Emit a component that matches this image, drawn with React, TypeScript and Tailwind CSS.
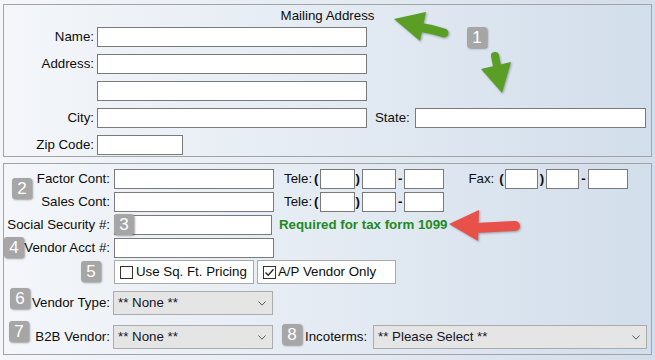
import React from "react";

const Field = ({ className = "" }: { className?: string }) => (
  <div className={`h-[20px] shrink-0 border border-[#7a7a7a] bg-white ${className}`} />
);

const Chevron = () => (
  <svg width="8" height="5" viewBox="0 0 8 5" className="shrink-0">
    <path d="M0.5 0.5 L4 4.2 L7.5 0.5" stroke="#5a5a5a" strokeWidth="1" fill="none" />
  </svg>
);

const Dropdown = ({ value, className = "" }: { value: string; className?: string }) => (
  <div
    className={`h-[24px] shrink-0 flex items-center justify-between border border-[#ababab] bg-[#e5e5e5] pl-[4px] pr-[6px] text-[#141428] ${className}`}
  >
    <span>{value}</span>
    <Chevron />
  </div>
);

const Check = ({ checked }: { checked?: boolean }) => (
  <div className="w-[13px] h-[13px] shrink-0 border border-[#333] bg-white flex items-center justify-center">
    {checked && (
      <svg width="11" height="11" viewBox="0 0 11 11">
        <path d="M1.5 5.5 L4.2 8.3 L9.5 2.2" stroke="#222" strokeWidth="1.3" fill="none" />
      </svg>
    )}
  </div>
);

const Badge = ({ n, className }: { n: string; className: string }) => (
  <div
    className={`absolute w-[20px] h-[21px] rounded-[3px] bg-[#a6a6a6] text-white text-[17px] font-light flex items-center justify-center shadow-[1px_1px_2px_rgba(0,0,0,0.35)] ${className}`}
  >
    {n}
  </div>
);

const Paren = ({ c }: { c: string }) => <span className="font-bold">{c}</span>;

const Phone = () => (
  <>
    <Paren c="(" />
    <Field className="ml-[1px] w-[35px]" />
    <span className="ml-[1px]"><Paren c=")" /></span>
    <Field className="ml-[2px] w-[34px]" />
    <span className="ml-[2px]"><Paren c="-" /></span>
    <Field className="ml-[2px] w-[40px]" />
  </>
);

export default function App() {
  return (
    <div className="relative w-[655px] h-[360px] overflow-hidden pt-[4px] bg-gradient-to-r from-[#f4f6fa] via-[#e4ebf3] to-[#d2deeb] text-[13.3px] leading-none text-[#0d0d0d] font-['Liberation_Sans',Arial,sans-serif]">
      {/* Mailing address */}
      <div className="ml-[3px] w-[649px] border border-[#a3a3a3] pb-[1px]">
        <div className="h-[22px] flex items-center justify-center">Mailing Address</div>
        <div className="flex flex-col gap-[7px]">
          <div className="flex items-center">
            <span className="w-[90px] text-right">Name:</span>
            <Field className="ml-[3px] w-[270px]" />
          </div>
          <div className="flex items-center">
            <span className="w-[90px] text-right">Address:</span>
            <Field className="ml-[3px] w-[270px]" />
          </div>
          <div className="flex items-center">
            <span className="w-[90px]" />
            <Field className="ml-[3px] w-[270px]" />
          </div>
          <div className="flex items-center">
            <span className="w-[90px] text-right">City:</span>
            <Field className="ml-[3px] w-[270px]" />
            <span className="ml-[8px]">State:</span>
            <Field className="ml-[5px] w-[231px]" />
          </div>
          <div className="flex items-center">
            <span className="w-[90px] text-right">Zip Code:</span>
            <Field className="ml-[3px] w-[86px]" />
          </div>
        </div>
      </div>

      {/* Vendor details */}
      <div className="ml-[3px] mt-[6px] w-[649px] border border-[#a3a3a3] pt-[5px] pb-[5px]">
        <div className="flex items-center">
          <span className="w-[106px] text-right">Factor Cont:</span>
          <Field className="ml-[4px] w-[160px]" />
          <span className="ml-[10px] mr-[2px]">Tele:</span>
          <Phone />
          <span className="ml-[24px] mr-[5px]">Fax:</span>
          <Paren c="(" />
          <Field className="ml-[1px] w-[33px]" />
          <span className="ml-[2px]"><Paren c=")" /></span>
          <Field className="ml-[2px] w-[33px]" />
          <span className="ml-[2px]"><Paren c="-" /></span>
          <Field className="ml-[2px] w-[40px]" />
        </div>
        <div className="mt-[3px] flex items-center">
          <span className="w-[106px] text-right">Sales Cont:</span>
          <Field className="ml-[4px] w-[160px]" />
          <span className="ml-[10px] mr-[2px]">Tele:</span>
          <Phone />
        </div>
        <div className="mt-[3px] flex items-center">
          <span className="w-[106px] text-right">Social Security #:</span>
          <Field className="ml-[4px] w-[158px]" />
          <span className="ml-[7px] font-bold text-[#1f8a1f]">Required for tax form 1099</span>
        </div>
        <div className="mt-[3px] flex items-center">
          <span className="w-[106px] text-right">Vendor Acct #:</span>
          <Field className="ml-[4px] w-[160px]" />
        </div>
        <div className="mt-[2px] flex items-center">
          <span className="w-[106px]" />
          <div className="ml-[4px] w-[140px] h-[24px] flex items-center gap-[3px] border border-[#a9a9a9] bg-white pl-[5px]">
            <Check />
            <span>Use Sq. Ft. Pricing</span>
          </div>
          <div className="ml-[3px] w-[139px] h-[24px] flex items-center gap-[2px] border border-[#a9a9a9] bg-white pl-[5px]">
            <Check checked />
            <span>A/P Vendor Only</span>
          </div>
        </div>
        <div className="mt-[7px] flex items-center">
          <span className="w-[106px] text-right">Vendor Type:</span>
          <Dropdown value="** None **" className="ml-[3px] w-[160px]" />
        </div>
        <div className="mt-[10px] flex items-center">
          <span className="w-[106px] text-right">B2B Vendor:</span>
          <Dropdown value="** None **" className="ml-[3px] w-[160px]" />
          <span className="ml-[32px]">Incoterms:</span>
          <Dropdown value="** Please Select **" className="ml-[6px] w-[274px]" />
        </div>
      </div>

      {/* Annotations */}
      <svg
        className="absolute left-0 top-0 pointer-events-none drop-shadow-[1px_1px_1px_rgba(0,0,0,0.3)]"
        width="655"
        height="360"
        viewBox="0 0 655 360"
      >
        <polygon points="394,19 426,12 420,41" fill="#5a9e25" />
        <path d="M418 27 Q432 29 444 33" stroke="#5a9e25" strokeWidth="9" strokeLinecap="round" fill="none" />
        <polygon points="502,93 481,69 511,62" fill="#5a9e25" />
        <path d="M495 56 L497 66" stroke="#5a9e25" strokeWidth="8" strokeLinecap="round" fill="none" />
        <polygon points="449,224 479,210 478,241" fill="#e8504a" />
        <path d="M476 228 L515 226" stroke="#e8504a" strokeWidth="10" strokeLinecap="round" fill="none" />
      </svg>
      <Badge n="1" className="left-[467px] top-[27px]" />
      <Badge n="2" className="left-[12px] top-[178px]" />
      <Badge n="3" className="left-[114px] top-[214px]" />
      <Badge n="4" className="left-[4px] top-[237px]" />
      <Badge n="5" className="left-[81px] top-[261px]" />
      <Badge n="6" className="left-[10px] top-[288px]" />
      <Badge n="7" className="left-[9px] top-[321px]" />
      <Badge n="8" className="left-[282px] top-[324px]" />
    </div>
  );
}
